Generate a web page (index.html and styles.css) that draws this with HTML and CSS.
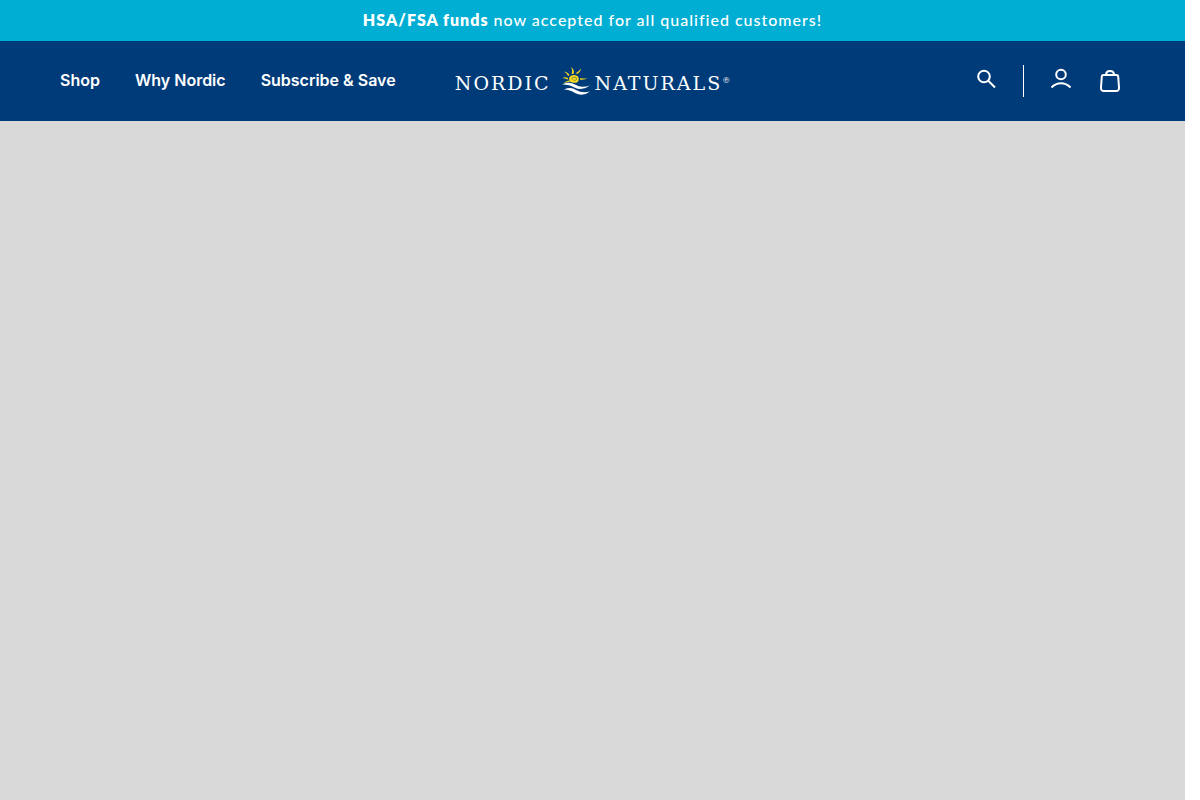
FILE: index.html
```html
<!DOCTYPE html>
<html lang="en">
<head>
    <meta charset="UTF-8">
    <meta name="viewport" content="width=device-width, initial-scale=1.0">
    <title>Nordic Naturals</title>
    <link rel="stylesheet" href="styles.css">
</head>
<body>
    <div class="announcement">
        <p><strong>HSA/FSA funds</strong> now accepted for all qualified customers!</p>
    </div>

    <header class="header">
        <nav class="nav" aria-label="Main">
            <a href="#shop">Shop</a>
            <a href="#why-nordic">Why Nordic</a>
            <a href="#subscribe">Subscribe &amp; Save</a>
        </nav>

        <a href="#home" class="logo">
            <span class="logo-word">NORDIC</span>
            <svg class="logo-mark" viewBox="0 0 30 30" aria-hidden="true">
                <g fill="#f7d91e">
                    <path d="M10 1 Q14 4 12.500 8 L10.800 8 Q12 4 10 1z" />
                    <path d="M20 2.500 Q19.500 6 16 8 L15 7 Q18 5.500 20 2.500z" />
                    <path d="M3 5.500 Q7 6 8.500 9 L7.200 10 Q6 7 3 5.500z" />
                    <path d="M1.500 12 Q4 10.500 7 12 L7 13.500 Q4 12 1.500 12z" />
                    <path d="M27 12 Q23 14.500 19 13.500 L19 12 Q23 13 27 12z" />
                    <path d="M2 18 Q4 15 8 14.500 L8.500 16 Q5 16 2 18z" />
                    <path d="M8.500 15.500 Q7 11 10.500 9.500 Q14.500 8 17 10.500 Q19 14 16 16.500 Q12 17.500 8.500 15.500z" />
                </g>
                <path d="M11 13.500 Q10.500 11.500 13 11 Q16 11 15.500 13.500 Q14.500 15 12.500 14" fill="none" stroke="#7d9037" />
                <path d="M1 18.500 Q8 15 14 18.500 Q20 22.500 29 19.500 Q21 25.500 13.500 21.500 Q8 18 1 18.500z" fill="#fff" />
                <path d="M3 23.500 Q10 20.500 15 24 Q21 27.500 29 25.500 Q22 31 14 27 Q9 23.500 3 23.500z" fill="#fff" />
            </svg>
            <span class="logo-word">NATURALS</span>
            <span class="logo-reg">®</span>
        </a>

        <div class="tools">
            <button type="button" aria-label="Search">
                <svg width="24" height="24" viewBox="0 0 24 24">
                    <circle cx="10" cy="8.500" r="5.800" />
                    <path d="M14 12.500 L21 19.500" />
                </svg>
            </button>
            <span class="divider"></span>
            <button type="button" aria-label="Account">
                <svg width="24" height="24" viewBox="0 0 24 24">
                    <circle cx="12" cy="6.500" r="4.800" />
                    <path d="M2.500 19.500 Q6.500 15.300 12 15.300 Q17.500 15.300 21.500 19.500" />
                </svg>
            </button>
            <button type="button" aria-label="Cart">
                <svg width="24" height="24" viewBox="0 0 24 24">
                    <path d="M5.500 7 H18.500 Q20 7 20.200 8.500 L21 19.500 Q21.200 23 18 23 H6 Q2.800 23 3 19.500 L3.800 8.500 Q4 7 5.500 7z" />
                    <path d="M8 7 Q8 3 12 3 Q16 3 16 7" />
                </svg>
            </button>
        </div>
    </header>

    <main class="hero"></main>
</body>
</html>
```
FILE: styles.css
```css
* {
    margin: 0;
    padding: 0;
    box-sizing: border-box;
}

body {
    display: flex;
    flex-direction: column;
    min-height: 100vh;
    padding-right: 15px;
    background: #fff;
    color: #fff;
    font-family: Inter, sans-serif;
}

a {
    color: inherit;
    text-decoration: none;
}

/* Announcement bar */
.announcement {
    padding: 10px 20px 11px;
    background: #00aed3;
    font-family: Lato, sans-serif;
    font-size: 16px;
    font-weight: 500;
    line-height: 20px;
    letter-spacing: 1px;
    text-align: center;
}

.announcement strong {
    font-weight: 800;
}

/* Header */
.header {
    display: grid;
    grid-template-columns: 1fr auto 1fr;
    align-items: center;
    height: 80px;
    padding: 0 63px 0 60px;
    background: #003b79;
}

.nav {
    display: flex;
    gap: 35px;
    padding-bottom: 2px;
    font-size: 16px;
    font-weight: 600;
    line-height: 24px;
    white-space: nowrap;
}

/* Logo */
.logo {
    display: flex;
    align-items: center;
    padding-left: 3px;
    font-family: "DejaVu Serif", serif;
    line-height: 24px;
}

.logo-word {
    padding-top: 4px;
    font-size: 19px;
    letter-spacing: 2px;
}

.logo-mark {
    width: 30px;
    height: 30px;
    margin: 0 4px 0 10px;
}

.logo-reg {
    font-size: 8px;
}

/* Search, account and cart */
.tools {
    display: flex;
    justify-content: flex-end;
    align-items: center;
    gap: 25px;
}

.tools button {
    display: flex;
    padding-bottom: 2px;
    border: 0;
    background: none;
    color: inherit;
    cursor: pointer;
}

.tools svg {
    fill: none;
    stroke: currentColor;
    stroke-width: 2;
}

.divider {
    width: 1px;
    height: 32px;
    background: #fff;
}

/* Hero placeholder */
.hero {
    flex: 1;
    background: #d9d9d9;
}
```
